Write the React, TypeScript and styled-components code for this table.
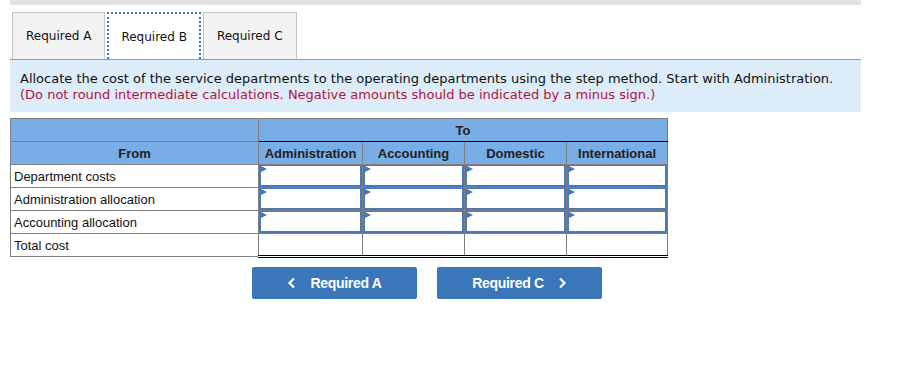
import React from "react"
import styled, { createGlobalStyle } from "styled-components"

const GlobalStyle = createGlobalStyle`
  body {
    margin: 0;
    background: #fff;
    font-family: "DejaVu Sans", Verdana, sans-serif;
  }
`

const columns = ["Administration", "Accounting", "Domestic", "International"]
const rows = ["Department costs", "Administration allocation", "Accounting allocation"]

const App = () => {
  return (
    <>
      <GlobalStyle />
      <Page>
        <TopBar />
        <Tabs>
          <Tab>Required A</Tab>
          <Tab $active>Required B</Tab>
          <Tab>Required C</Tab>
        </Tabs>
        <Instructions>
          <p>
            Allocate the cost of the service departments to the operating departments using the step
            method. Start with Administration.
          </p>
          <Note>
            (Do not round intermediate calculations. Negative amounts should be indicated by a minus
            sign.)
          </Note>
        </Instructions>

        <Grid>
          <colgroup>
            <col style={{ width: 248 }} />
            <col style={{ width: 104 }} />
            <col style={{ width: 102 }} />
            <col style={{ width: 102 }} />
            <col style={{ width: 101 }} />
          </colgroup>
          <thead>
            <tr>
              <HeadCell />
              <HeadCell colSpan={4} $to>
                To
              </HeadCell>
            </tr>
            <tr>
              <HeadCell>From</HeadCell>
              {columns.map((c) => (
                <HeadCell key={c}>{c}</HeadCell>
              ))}
            </tr>
          </thead>
          <tbody>
            {rows.map((r) => (
              <tr key={r}>
                <Label>{r}</Label>
                {columns.map((c) => (
                  <EntryCell key={c}>
                    <Entry />
                  </EntryCell>
                ))}
              </tr>
            ))}
            <tr>
              <Label>Total cost</Label>
              {columns.map((c) => (
                <TotalCell key={c} />
              ))}
            </tr>
          </tbody>
        </Grid>

        <Nav>
          <NavButton>
            <Chevron viewBox="0 0 10 12">
              <path d="M7 1.5 L2.5 6 L7 10.5" />
            </Chevron>
            Required A
          </NavButton>
          <NavButton>
            Required C
            <Chevron viewBox="0 0 10 12">
              <path d="M3 1.5 L7.5 6 L3 10.5" />
            </Chevron>
          </NavButton>
        </Nav>
      </Page>
    </>
  )
}

export default App

const Page = styled.div`
  width: 851px;
  padding: 0 10px;
`

const TopBar = styled.div`
  height: 5px;
  background: #e1e1e1;
`

const Tabs = styled.div`
  display: flex;
  gap: 2px;
  margin-top: 7px;
  padding-left: 2px;
`

const Tab = styled.div<{ $active?: boolean }>`
  box-sizing: border-box;
  height: 47px;
  padding: 0 ${(p) => (p.$active ? "12px" : "13px")};
  display: flex;
  align-items: center;
  font-size: 12px;
  color: #111;
  background: ${(p) => (p.$active ? "#fff" : "#f2f2f2")};
  border: ${(p) => (p.$active ? "2px dotted #3c73ba" : "1px solid #c4c4c4")};
  border-bottom: none;
`

const Instructions = styled.div`
  box-sizing: border-box;
  height: 53px;
  background: #dcecf9;
  border-top: 1px solid #9a9a9a;
  padding: 11px 10px 0;
  font-size: 13px;
  line-height: 16px;
  color: #111;

  p {
    margin: 0;
  }
`

const Note = styled.p`
  color: #b3143c;
`

const Grid = styled.table`
  margin-top: 6px;
  border-collapse: collapse;
  table-layout: fixed;
  width: 657px;
  font-family: "Liberation Sans", Arial, sans-serif;
  font-size: 13px;
  color: #111;
`

const HeadCell = styled.th<{ $to?: boolean }>`
  height: 22px;
  padding: 0 4px;
  background: #79ade6;
  border: 1px solid #7f7f7f;
  border-bottom: 1px solid ${(p) => (p.$to ? "#000" : "#7f7f7f")};
  font-weight: bold;
  color: #222;
  text-align: center;
  white-space: nowrap;
  overflow: hidden;
`

const Label = styled.td`
  height: 22px;
  padding: 0 3px;
  border: 1px solid #7f7f7f;
  white-space: nowrap;
`

const EntryCell = styled.td`
  height: 22px;
  padding: 0;
  border: 1px solid #7f7f7f;
`

const Entry = styled.div`
  position: relative;
  box-sizing: border-box;
  height: 22px;
  border: 2px solid #4b79b7;
  border-top-width: 1px;

  &::before {
    content: "";
    position: absolute;
    left: 0;
    top: 0;
    border-left: 6px solid #3d78c4;
    border-top: 3px solid transparent;
    border-bottom: 3px solid transparent;
  }
`

const TotalCell = styled.td`
  height: 21px;
  padding: 0;
  border: 1px solid #7f7f7f;
  border-bottom: 3px double #000;
`

const Nav = styled.div`
  display: flex;
  gap: 20px;
  margin-top: 9px;
  padding-left: 242px;
`

const NavButton = styled.button`
  width: 165px;
  height: 32px;
  display: flex;
  align-items: center;
  justify-content: center;
  gap: 13px;
  border: none;
  border-radius: 2px;
  background: #3a76ba;
  color: #fff;
  font-family: "Liberation Sans", Arial, sans-serif;
  font-weight: bold;
  font-size: 14px;
  letter-spacing: -0.3px;
`

const Chevron = styled.svg`
  width: 10px;
  height: 12px;
  fill: none;
  stroke: #fff;
  stroke-width: 2.2;
`
